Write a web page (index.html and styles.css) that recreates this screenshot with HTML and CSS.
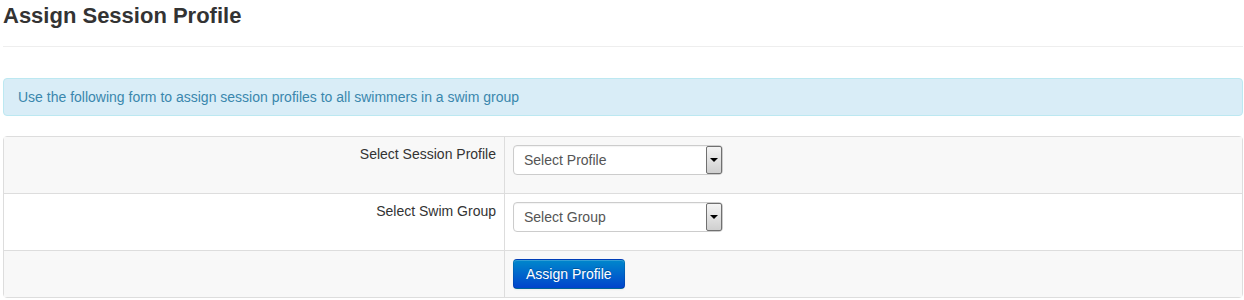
FILE: index.html
```html
<!DOCTYPE html>
<html lang="en">

<head>
    <meta charset="UTF-8">
    <title>Assign Session Profile</title>
    <link rel="stylesheet" href="styles.css">
</head>

<body>

    <div class="page">
        <div class="page-header">
            <h3>Assign Session Profile</h3>
        </div>

        <div class="alert-info">Use the following form to assign session profiles to all swimmers in a swim group</div>

        <table class="form-table">
            <tr class="odd">
                <td class="label-cell">Select Session Profile</td>
                <td>
                    <span class="select-wrap">
                        <select class="select">
                            <option>Select Profile</option>
                        </select>
                        <span class="select-arrow"></span>
                    </span>
                </td>
            </tr>
            <tr>
                <td class="label-cell">Select Swim Group</td>
                <td>
                    <span class="select-wrap">
                        <select class="select">
                            <option>Select Group</option>
                        </select>
                        <span class="select-arrow"></span>
                    </span>
                </td>
            </tr>
            <tr class="odd last">
                <td class="label-cell"></td>
                <td><button class="btn-primary">Assign Profile</button></td>
            </tr>
        </table>
    </div>

</body>

</html>
```

FILE: styles.css
```css
body,
html {
    margin: 0;
    padding: 0;
    font-family: 'Liberation Sans', Arial, sans-serif;
    font-size: 14px;
    line-height: 20px;
    color: #333;
    background: #fff;
}

.page {
    width: 1240px;
    margin-left: 3px;
}

.page-header {
    padding: 3px 0 17px;
    border-bottom: 1px solid #eee;
}

.page-header h3 {
    margin: 0;
    font-size: 22px;
    line-height: 26px;
    font-weight: bold;
}

.alert-info {
    margin-top: 31px;
    padding: 8px 35px 8px 14px;
    background-color: #d9edf7;
    border: 1px solid #bce8f1;
    border-radius: 4px;
    color: #3a87ad;
}

.form-table {
    width: 100%;
    margin-top: 20px;
    border: 1px solid #ddd;
    border-collapse: separate;
    border-spacing: 0;
    border-radius: 4px;
}

.form-table td {
    padding: 8px;
    vertical-align: top;
    border-bottom: 1px solid #ddd;
}

.form-table tr.last td {
    border-bottom: none;
}

.form-table tr.odd td {
    background-color: #f8f8f8;
}

.form-table td.label-cell {
    width: 484px;
    text-align: right;
    border-right: 1px solid #ddd;
    padding-top: 7px;
}

.select-wrap {
    position: relative;
    display: inline-block;
    margin-bottom: 10px;
    vertical-align: top;
}

.select {
    display: block;
    width: 210px;
    height: 30px;
    margin: 0;
    padding: 4px 6px 4px 10px;
    border: 1px solid #ccc;
    border-radius: 4px;
    background: #fff;
    color: #555;
    font-family: 'Liberation Sans', Arial, sans-serif;
    font-size: 14px;
    -webkit-appearance: none;
    appearance: none;
    box-shadow: inset 0 1px 1px rgba(0, 0, 0, 0.05);
}

.select-arrow {
    position: absolute;
    top: 1px;
    right: 1px;
    width: 14px;
    height: 26px;
    border: 1px solid #707070;
    border-radius: 2px;
    background: linear-gradient(to bottom, #f4f4f4, #e2e2e2 50%, #cfcfcf);
}

.select-arrow::after {
    content: '';
    position: absolute;
    left: 3px;
    top: 11px;
    border-left: 4px solid transparent;
    border-right: 4px solid transparent;
    border-top: 4px solid #000;
}

.btn-primary {
    display: block;
    height: 30px;
    padding: 4px 12px;
    font-family: 'Liberation Sans', Arial, sans-serif;
    font-size: 14px;
    line-height: 20px;
    color: #fff;
    background: linear-gradient(to bottom, #0088cc, #0044cc);
    border: 1px solid #0044cc;
    border-color: rgba(0, 0, 0, 0.1) rgba(0, 0, 0, 0.1) rgba(0, 0, 0, 0.25);
    border-radius: 4px;
    box-shadow: inset 0 1px 0 rgba(255, 255, 255, 0.2), 0 1px 2px rgba(0, 0, 0, 0.05);
    text-shadow: 0 -1px 0 rgba(0, 0, 0, 0.25);
    cursor: pointer;
}
```
